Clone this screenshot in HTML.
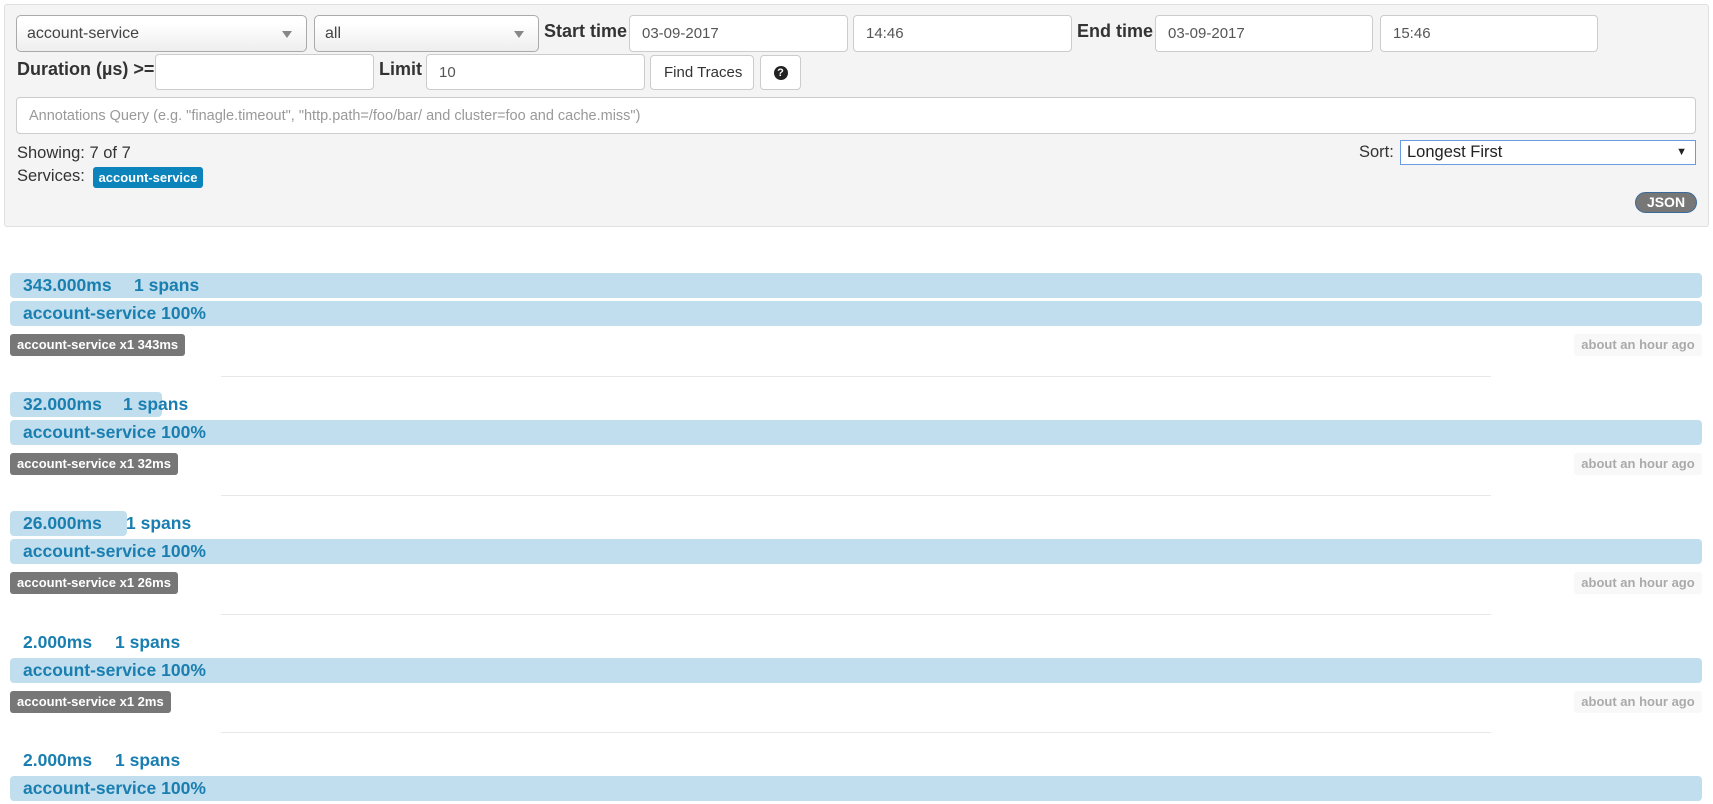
<!DOCTYPE html>
<html><head><meta charset="utf-8"><style>
*{box-sizing:border-box}
body{margin:0;width:1713px;height:804px;overflow:hidden;background:#fff;font-family:"Liberation Sans",Arial,sans-serif;position:relative}
.a{position:absolute}
.panel{left:4px;top:4px;width:1705px;height:223px;background:#f4f4f4;border:1px solid #e0e0e0;border-radius:3px}
.inp{position:absolute;background:#fff;border:1px solid #ccc;border-radius:4px;font-size:15px;color:#555;padding-left:12px;display:flex;align-items:center}
.sel{position:absolute;border:1px solid #aaa;border-radius:5px;background:linear-gradient(#fff 20%,#eee 100%);font-size:16px;color:#444;padding-left:10px;display:flex;align-items:center}
.sel:after{content:"";position:absolute;right:14px;top:15px;border-left:5px solid transparent;border-right:5px solid transparent;border-top:7px solid #888}
.lbl{position:absolute;font-weight:bold;font-size:18px;color:#333}
.bar{position:absolute;left:10px;height:25px;background:#c0deed;border-radius:4px}
.t{position:absolute;font-weight:bold;font-size:17.5px;color:#1a7fb0;white-space:nowrap}
.badge{position:absolute;left:10px;height:22px;background:#777;border-radius:3px;color:#fff;font-weight:bold;font-size:13px;padding:0 7px;line-height:22px}
.ago{position:absolute;left:1574px;width:128px;height:22px;background:#f8f8f8;border-radius:3px;color:#aaa;font-weight:bold;font-size:13px;line-height:22px;text-align:center}
.div{position:absolute;left:221px;width:1270px;height:1px;background:#e8e8e8}
</style></head><body>
<div class="a panel"></div>
<div class="sel" style="left:16px;top:15px;width:291px;height:37px">account-service</div>
<div class="sel" style="left:314px;top:15px;width:225px;height:37px">all</div>
<div class="lbl" style="left:544px;top:21px">Start time</div>
<div class="inp" style="left:629px;top:15px;width:219px;height:37px">03-09-2017</div>
<div class="inp" style="left:853px;top:15px;width:219px;height:37px">14:46</div>
<div class="lbl" style="left:1077px;top:21px">End time</div>
<div class="inp" style="left:1155px;top:15px;width:218px;height:37px">03-09-2017</div>
<div class="inp" style="left:1380px;top:15px;width:218px;height:37px">15:46</div>
<div class="lbl" style="left:17px;top:59px">Duration (µs) &gt;=</div>
<div class="inp" style="left:155px;top:54px;width:219px;height:36px"></div>
<div class="lbl" style="left:379px;top:59px">Limit</div>
<div class="inp" style="left:426px;top:54px;width:219px;height:36px">10</div>
<div class="inp" style="left:650px;top:55px;width:104px;height:35px;color:#333;padding-left:13px">Find Traces</div>
<div class="inp" style="left:760px;top:55px;width:41px;height:35px;padding:0;justify-content:center"><span style="display:inline-block;width:14px;height:14px;border-radius:50%;background:#222;color:#fff;font-size:11px;font-weight:bold;text-align:center;line-height:14px">?</span></div>
<div class="inp" style="left:16px;top:97px;width:1680px;height:37px;color:#999;font-size:14.5px">Annotations Query (e.g. "finagle.timeout", "http.path=/foo/bar/ and cluster=foo and cache.miss")</div>
<div class="a" style="left:17px;top:144px;font-size:16.5px;color:#333">Showing: 7 of 7</div>
<div class="a" style="left:17px;top:167px;font-size:16.5px;color:#333">Services:</div>
<div class="a" style="left:93px;top:167px;width:110px;height:21px;background:#0a84bb;border-radius:3px;color:#fff;font-weight:bold;font-size:13px;line-height:21px;text-align:center">account-service</div>
<div class="a" style="left:1359px;top:143px;font-size:16.5px;color:#333">Sort:</div>
<div class="a" style="left:1400px;top:140px;width:296px;height:25px;background:#fff;border:1px solid #6a9be0;font-size:16.5px;color:#222;padding-left:6px;line-height:23px">Longest First<span style="position:absolute;right:8px;font-size:11px">▼</span></div>
<div class="a" style="left:1635px;top:192px;width:62px;height:21px;background:#777;border:1px solid #3a6a9a;border-radius:11px;color:#fff;font-weight:bold;font-size:14px;line-height:19px;text-align:center">JSON</div>

<div class="bar" style="top:273px;width:1692px"></div><div class="t" style="left:23px;top:275px">343.000ms</div><div class="t" style="left:134px;top:275px">1 spans</div>
<div class="bar" style="top:301px;width:1692px"></div><div class="t" style="left:23px;top:303px">account-service 100%</div>
<div class="badge" style="top:334px">account-service x1 343ms</div><div class="ago" style="top:334px">about an hour ago</div>
<div class="div" style="top:376px"></div>

<div class="bar" style="top:392px;width:152px"></div><div class="t" style="left:23px;top:394px">32.000ms</div><div class="t" style="left:123px;top:394px">1 spans</div>
<div class="bar" style="top:420px;width:1692px"></div><div class="t" style="left:23px;top:422px">account-service 100%</div>
<div class="badge" style="top:453px">account-service x1 32ms</div><div class="ago" style="top:453px">about an hour ago</div>
<div class="div" style="top:495px"></div>

<div class="bar" style="top:511px;width:117px"></div><div class="t" style="left:23px;top:513px">26.000ms</div><div class="t" style="left:126px;top:513px">1 spans</div>
<div class="bar" style="top:539px;width:1692px"></div><div class="t" style="left:23px;top:541px">account-service 100%</div>
<div class="badge" style="top:572px">account-service x1 26ms</div><div class="ago" style="top:572px">about an hour ago</div>
<div class="div" style="top:614px"></div>

<div class="t" style="left:23px;top:632px">2.000ms</div><div class="t" style="left:115px;top:632px">1 spans</div>
<div class="bar" style="top:658px;width:1692px"></div><div class="t" style="left:23px;top:660px">account-service 100%</div>
<div class="badge" style="top:691px">account-service x1 2ms</div><div class="ago" style="top:691px">about an hour ago</div>
<div class="div" style="top:732px"></div>

<div class="t" style="left:23px;top:750px">2.000ms</div><div class="t" style="left:115px;top:750px">1 spans</div>
<div class="bar" style="top:776px;width:1692px"></div><div class="t" style="left:23px;top:778px">account-service 100%</div>
</body></html>
